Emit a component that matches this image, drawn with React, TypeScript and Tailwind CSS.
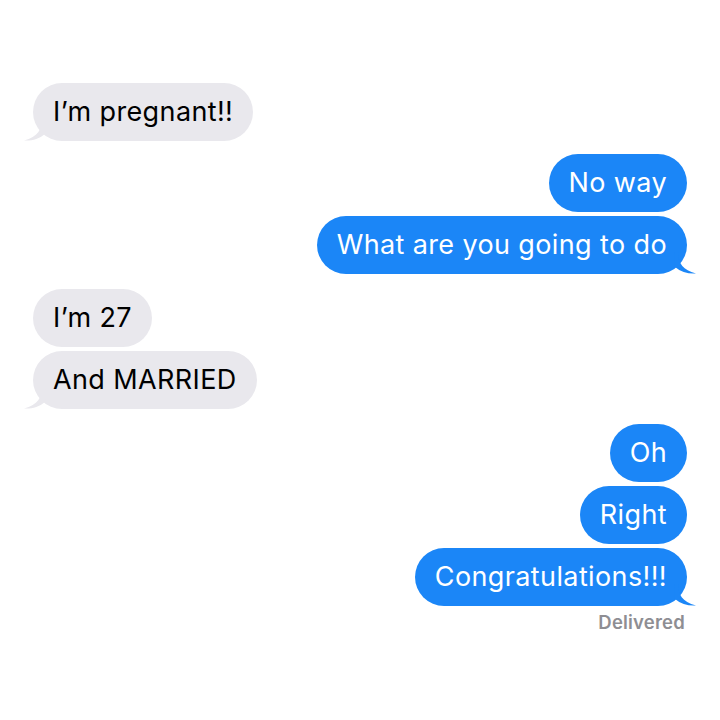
import React from 'react';

type Msg = { text: string; tail?: boolean };

const Tail = ({ side, color }: { side: 'left' | 'right'; color: string }) => (
  <svg
    className={`absolute bottom-0 ${side === 'left' ? '-left-[9px]' : '-right-[9px] -scale-x-100'}`}
    width="22"
    height="22"
    viewBox="0 0 22 22"
    aria-hidden="true"
  >
    <path d="M18 0 C18 10 14 18 0 21.5 C8 22 15 20 21 15 L22 0 Z" fill={color} />
  </svg>
);

const Bubble = ({ text, tail, me }: Msg & { me?: boolean }) => (
  <div
    className={`relative rounded-[29px] h-[58px] px-[20px] flex items-center text-[27px] tracking-[0.38px] ${
      me ? 'bg-[#1b86f7] text-white' : 'bg-[#e9e8ed] text-black'
    }`}
  >
    {tail && <Tail side={me ? 'right' : 'left'} color={me ? '#1b86f7' : '#e9e8ed'} />}
    <span className="relative">{text}</span>
  </div>
);

const Group = ({ msgs, me }: { msgs: Msg[]; me?: boolean }) => (
  <div className={`flex flex-col gap-[4px] ${me ? 'items-end' : 'items-start'}`}>
    {msgs.map((m) => (
      <Bubble key={m.text} {...m} me={me} />
    ))}
  </div>
);

export default function App() {
  return (
    <div
      className="w-[720px] h-[720px] bg-white px-[33px] pt-[83px] flex flex-col"
      style={{ fontFamily: 'Inter, "Liberation Sans", sans-serif' }}
    >
      <Group msgs={[{ text: 'I’m pregnant!!', tail: true }]} />
      <div className="mt-[13px]">
        <Group me msgs={[{ text: 'No way' }, { text: 'What are you going to do', tail: true }]} />
      </div>
      <div className="mt-[15px]">
        <Group msgs={[{ text: 'I’m 27' }, { text: 'And MARRIED', tail: true }]} />
      </div>
      <div className="mt-[15px]">
        <Group me msgs={[{ text: 'Oh' }, { text: 'Right' }, { text: 'Congratulations!!!', tail: true }]} />
      </div>
      <div className="mt-[3px] text-right pr-[2px] text-[18.5px] font-semibold tracking-[0.2px] text-[#8e8e93]">
        Delivered
      </div>
    </div>
  );
}
